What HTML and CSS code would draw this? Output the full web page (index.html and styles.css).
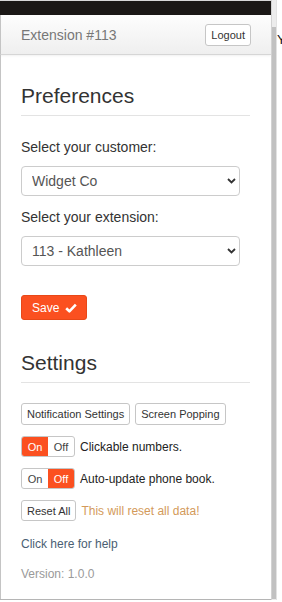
FILE: index.html
```html
<!DOCTYPE html>
<html lang="en">
<head>
    <meta charset="UTF-8">
    <meta name="viewport" content="width=device-width, initial-scale=1.0">
    <title>Extension #113</title>
    <link rel="stylesheet" href="styles.css">
</head>
<body>
    <div class="screen">
        <div class="popup">
            <div class="topbar"></div>
            <div class="header">
                <span class="header-title">Extension #113</span>
                <button class="btn">Logout</button>
            </div>

            <div class="content">
                <h2>Preferences</h2>

                <label class="field-label" for="customer">Select your customer:</label>
                <div class="select-wrap">
                    <select id="customer">
                        <option>Widget Co</option>
                    </select>
                    <svg class="chevron" width="9" height="6" viewBox="0 0 9 6"><path d="M1 1l3.5 3.5L8 1" fill="none" stroke="#333" stroke-width="1.8"/></svg>
                </div>

                <label class="field-label second" for="extension">Select your extension:</label>
                <div class="select-wrap">
                    <select id="extension">
                        <option>113 - Kathleen</option>
                    </select>
                    <svg class="chevron" width="9" height="6" viewBox="0 0 9 6"><path d="M1 1l3.5 3.5L8 1" fill="none" stroke="#333" stroke-width="1.8"/></svg>
                </div>

                <button class="save-button">Save
                    <svg width="12" height="10" viewBox="0 0 12 10"><path d="M1.2 5.2l3.2 3.1L10.8 1.6" fill="none" stroke="#fff" stroke-width="2.6" stroke-linejoin="round"/></svg>
                </button>

                <h2 class="settings-title">Settings</h2>

                <div class="row first-row">
                    <button class="btn">Notification Settings</button>
                    <button class="btn">Screen Popping</button>
                </div>

                <div class="row">
                    <div class="toggle">
                        <span class="active">On</span>
                        <span>Off</span>
                    </div>
                    <span class="row-text">Clickable numbers.</span>
                </div>

                <div class="row">
                    <div class="toggle">
                        <span>On</span>
                        <span class="active">Off</span>
                    </div>
                    <span class="row-text">Auto-update phone book.</span>
                </div>

                <div class="row">
                    <button class="btn">Reset All</button>
                    <span class="row-text warning">This will reset all data!</span>
                </div>

                <a class="help-link" href="#">Click here for help</a>
                <p class="version">Version: 1.0.0</p>
            </div>
        </div>

        <div class="scrollbar">
            <div class="thumb"></div>
        </div>
        <div class="behind">Y</div>
    </div>
</body>
</html>
```

FILE: styles.css
```css
body {
    margin: 0;
    background: #fff;
    font-family: "Liberation Sans", Arial, sans-serif;
    color: #333;
    overflow: hidden;
}

.screen {
    display: flex;
    height: 602px;
}

.popup {
    box-sizing: border-box;
    width: 271px;
    height: 600px;
    border-bottom: 1px solid #b5b5b5;
    display: flex;
    flex-direction: column;
}

.topbar {
    height: 15px;
    background: #1b1816;
    border-top: 1px solid #d8d8d8;
    box-sizing: border-box;
}

.header {
    height: 40px;
    box-sizing: border-box;
    border-left: 1px solid #c4c4c4;
    border-bottom: 1px solid #d6d6d6;
    background: linear-gradient(#fdfdfd, #efefef);
    box-shadow: 0 1px 2px rgba(0, 0, 0, 0.06);
    display: flex;
    align-items: center;
    justify-content: space-between;
    padding: 0 20px 0 20px;
}

.header-title {
    font-size: 14px;
    color: #777;
}

.content {
    flex: 1;
    border-left: 1px solid #c4c4c4;
    padding: 29px 21px 0 20px;
}

h2 {
    margin: 0;
    font-size: 21px;
    font-weight: normal;
    line-height: 24px;
    color: #333;
    padding-bottom: 7px;
    border-bottom: 1px solid #e3e3e3;
}

.settings-title {
    margin-top: 31px;
}

.field-label {
    display: block;
    margin-top: 21px;
    font-size: 14px;
    line-height: 20px;
}

.field-label.second {
    margin-top: 11px;
}

.select-wrap {
    position: relative;
    width: 219px;
    margin-top: 9px;
}

.select-wrap select {
    -webkit-appearance: none;
    appearance: none;
    width: 100%;
    height: 30px;
    box-sizing: border-box;
    border: 1px solid #ccc;
    border-radius: 4px;
    background: #fff;
    padding: 0 0 0 10px;
    font-family: inherit;
    font-size: 14px;
    color: #555;
}

.chevron {
    position: absolute;
    right: 4px;
    top: 12px;
}

.btn {
    height: 22px;
    box-sizing: border-box;
    background: #fff;
    border: 1px solid #c6c6c6;
    border-radius: 3px;
    padding: 0 5px;
    font-family: inherit;
    font-size: 11px;
    color: #333;
}

.save-button {
    display: flex;
    align-items: center;
    gap: 6px;
    margin-top: 29px;
    width: 66px;
    height: 25px;
    box-sizing: border-box;
    background: #fb5020;
    border: 1px solid #e84818;
    border-radius: 3px;
    padding: 0 0 0 10px;
    font-family: inherit;
    font-size: 12px;
    color: #fff;
}

.row {
    display: flex;
    align-items: center;
    margin-top: 11px;
    height: 21px;
    font-size: 12px;
}

.row .btn {
    height: 21px;
}

.first-row {
    margin-top: 20px;
    height: 22px;
    gap: 5px;
}

.first-row .btn {
    height: 22px;
}

.toggle {
    display: flex;
    height: 21px;
    box-sizing: border-box;
    border: 1px solid #c6c6c6;
    border-radius: 3px;
    overflow: hidden;
}

.toggle span {
    width: 26px;
    display: flex;
    align-items: center;
    justify-content: center;
    font-size: 11px;
    color: #444;
}

.toggle span.active {
    background: #fb5020;
    color: #fff;
}

.row-text {
    margin-left: 5px;
    color: #222;
}

.warning {
    color: #d39a5a;
}

.help-link {
    display: block;
    margin-top: 15px;
    font-size: 12px;
    line-height: 16px;
    color: #4a6073;
    text-decoration: none;
}

.version {
    margin: 14px 0 0;
    font-size: 12px;
    line-height: 16px;
    color: #9a9a9a;
}

.scrollbar {
    box-sizing: border-box;
    width: 6px;
    height: 600px;
    background: #ececec;
    border-left: 1px solid #d2d2d2;
    border-right: 1px solid #e2e2e2;
    padding-top: 27px;
}

.thumb {
    height: 572px;
    background: #c1c1c1;
}

.behind {
    padding-top: 32px;
    font-size: 13px;
    color: #111;
    overflow: hidden;
    width: 5px;
}
```
